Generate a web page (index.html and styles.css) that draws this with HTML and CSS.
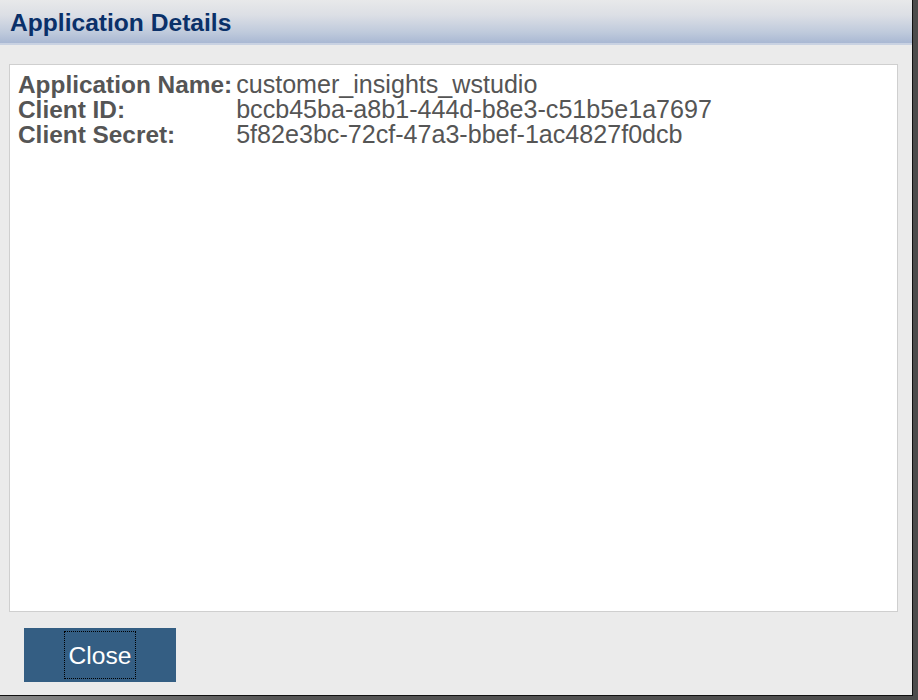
FILE: index.html
```html
<!DOCTYPE html>
<html>
<head>
<meta charset="utf-8">
<title>Application Details</title>
<link rel="stylesheet" href="styles.css">
</head>
<body>
<div class="dialog">
  <div class="header">
    <h1 class="title">Application Details</h1>
  </div>
  <div class="body">
    <div class="details">
      <table class="info">
        <tr><th>Application Name:</th><td>customer_insights_wstudio</td></tr>
        <tr><th>Client ID:</th><td>bccb45ba-a8b1-444d-b8e3-c51b5e1a7697</td></tr>
        <tr><th>Client Secret:</th><td>5f82e3bc-72cf-47a3-bbef-1ac4827f0dcb</td></tr>
      </table>
    </div>
    <div class="actions">
      <button class="btn" type="button"><span class="btn-label">Close</span></button>
    </div>
  </div>
</div>
</body>
</html>
```

FILE: styles.css
```css
html, body {
  margin: 0;
  padding: 0;
}
body {
  width: 918px;
  height: 700px;
  overflow: hidden;
  background: linear-gradient(to right, #8a8a8a, #555 30%, #4c4c4c);
  font-family: "Liberation Sans", Arial, Helvetica, sans-serif;
}
.dialog {
  width: 912px;
  height: 695px;
  background: #ebebeb;
  border-right: 1px solid #111;
  border-bottom: 1px solid #111;
  display: flex;
  flex-direction: column;
}
.header {
  height: 43px;
  background: linear-gradient(to bottom, #e8e9ea 0%, #dcdfe5 35%, #bfcadc 75%, #a9b8d3 100%);
  border-bottom: 2px solid #c9d2e2;
  padding: 0 0 0 10px;
}
.title {
  margin: 0;
  padding-top: 3px;
  font-size: 24.6px;
  line-height: 40px;
  font-weight: bold;
  color: #0a3069;
}
.body {
  padding: 19px 14px 0 9px;
  display: flex;
  flex-direction: column;
}
.details {
  box-sizing: border-box;
  height: 548px;
  background: #fff;
  border: 1px solid #cfcfcf;
  padding: 7px 8px 0 8px;
}
.info {
  border-collapse: collapse;
  font-size: 25.1px;
  line-height: 25px;
  color: #555;
}
.info th {
  text-align: left;
  font-weight: bold;
  font-size: 24.4px;
  padding: 0 4px 0 0;
  white-space: nowrap;
}
.info td {
  padding: 0;
  white-space: nowrap;
}
.actions {
  padding: 16px 0 0 15px;
  display: flex;
}
.btn {
  width: 152px;
  height: 54px;
  background: #345e83;
  border: none;
  margin: 0;
  padding: 0;
  display: flex;
  align-items: center;
  justify-content: center;
  font-family: "Liberation Sans", Arial, Helvetica, sans-serif;
  font-size: 24.6px;
  color: #fff;
  cursor: pointer;
}
.btn-label {
  display: block;
  border: 1px dotted #000;
  padding: 0 4px;
  height: 46px;
  line-height: 47px;
}
```
